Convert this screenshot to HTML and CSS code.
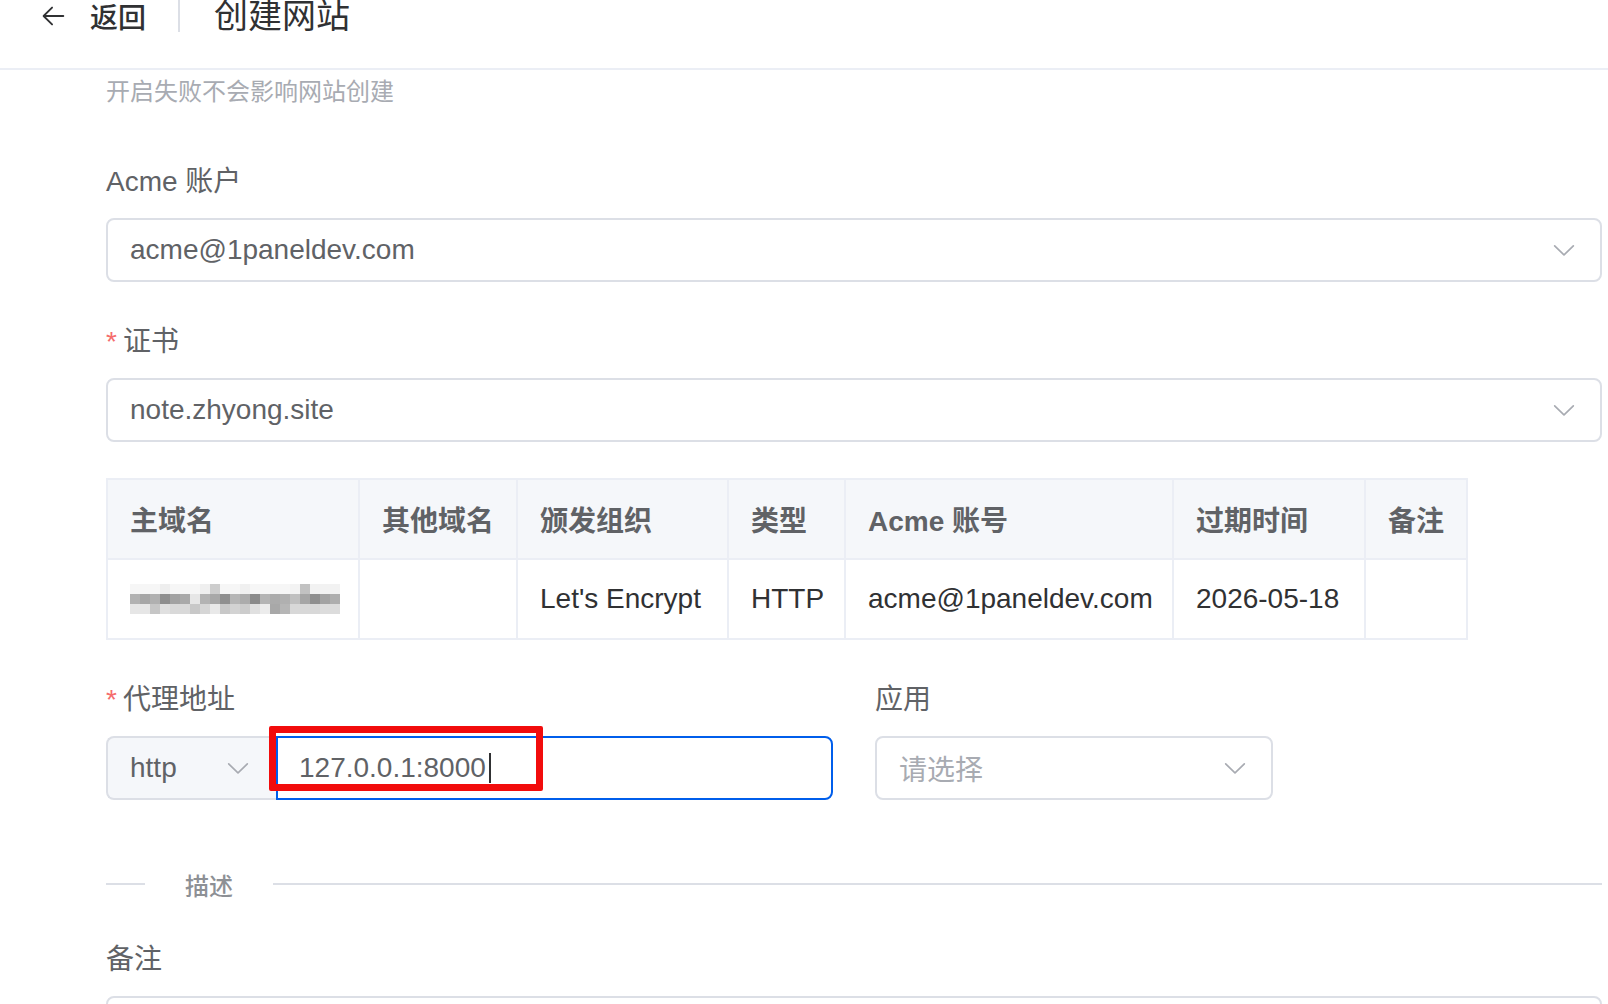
FILE: index.html
```html
<!DOCTYPE html>
<html lang="zh-CN">
<head>
    <meta charset="UTF-8">
    <meta name="viewport" content="width=device-width, initial-scale=1.0">
    <title>创建网站</title>
    <link rel="stylesheet" href="styles.css">
</head>
<body>
    <div class="header">
        <a class="back">
            <svg class="back-icon" viewBox="0 0 1024 1024"><path fill="currentColor" d="M224 480h640a32 32 0 1 1 0 64H224a32 32 0 0 1 0-64z"/><path fill="currentColor" d="m237.248 512 265.408 265.344a32 32 0 0 1-45.312 45.312l-288-288a32 32 0 0 1 0-45.312l288-288a32 32 0 1 1 45.312 45.312L237.248 512z"/></svg>
            <span>返回</span>
        </a>
        <span class="sep"></span>
        <span class="title">创建网站</span>
    </div>

    <div class="content">
        <div class="hint">开启失败不会影响网站创建</div>

        <div class="form-item">
            <label class="label">Acme 账户</label>
            <div class="select">
                <span>acme@1paneldev.com</span>
                <svg class="arrow" viewBox="0 0 1024 1024"><path fill="currentColor" d="M831.872 340.864 512 652.672 192.128 340.864a30.592 30.592 0 0 0-42.752 0 29.12 29.12 0 0 0 0 41.6L489.664 714.24a32 32 0 0 0 44.672 0l340.288-331.712a29.12 29.12 0 0 0 0-41.728 30.592 30.592 0 0 0-42.752 0z"/></svg>
            </div>
        </div>

        <div class="form-item">
            <label class="label required">证书</label>
            <div class="select">
                <span>note.zhyong.site</span>
                <svg class="arrow" viewBox="0 0 1024 1024"><path fill="currentColor" d="M831.872 340.864 512 652.672 192.128 340.864a30.592 30.592 0 0 0-42.752 0 29.12 29.12 0 0 0 0 41.6L489.664 714.24a32 32 0 0 0 44.672 0l340.288-331.712a29.12 29.12 0 0 0 0-41.728 30.592 30.592 0 0 0-42.752 0z"/></svg>
            </div>
        </div>

        <table class="cert-table">
            <colgroup>
                <col class="c-domain">
                <col class="c-other">
                <col class="c-org">
                <col class="c-type">
                <col class="c-acme">
                <col class="c-expire">
                <col class="c-note">
            </colgroup>
            <thead>
                <tr>
                    <th>主域名</th>
                    <th>其他域名</th>
                    <th>颁发组织</th>
                    <th>类型</th>
                    <th>Acme 账号</th>
                    <th>过期时间</th>
                    <th>备注</th>
                </tr>
            </thead>
            <tbody>
                <tr>
                    <td><div class="blur"><div class="blur-top"></div><div class="blur-mid"></div><div class="blur-bottom"></div></div></td>
                    <td></td>
                    <td>Let's Encrypt</td>
                    <td>HTTP</td>
                    <td>acme@1paneldev.com</td>
                    <td>2026-05-18</td>
                    <td></td>
                </tr>
            </tbody>
        </table>

        <div class="form-row">
            <div class="form-item proxy">
                <label class="label required">代理地址</label>
                <div class="input-group">
                    <div class="prepend">
                        <span>http</span>
                        <svg class="arrow" viewBox="0 0 1024 1024"><path fill="currentColor" d="M831.872 340.864 512 652.672 192.128 340.864a30.592 30.592 0 0 0-42.752 0 29.12 29.12 0 0 0 0 41.6L489.664 714.24a32 32 0 0 0 44.672 0l340.288-331.712a29.12 29.12 0 0 0 0-41.728 30.592 30.592 0 0 0-42.752 0z"/></svg>
                    </div>
                    <div class="input focused">
                        <span>127.0.0.1:8000</span><span class="caret"></span>
                    </div>
                    <div class="mark"></div>
                </div>
            </div>
            <div class="form-item app">
                <label class="label">应用</label>
                <div class="select">
                    <span class="placeholder">请选择</span>
                    <svg class="arrow" viewBox="0 0 1024 1024"><path fill="currentColor" d="M831.872 340.864 512 652.672 192.128 340.864a30.592 30.592 0 0 0-42.752 0 29.12 29.12 0 0 0 0 41.6L489.664 714.24a32 32 0 0 0 44.672 0l340.288-331.712a29.12 29.12 0 0 0 0-41.728 30.592 30.592 0 0 0-42.752 0z"/></svg>
                </div>
            </div>
        </div>

        <div class="divider"><span>描述</span></div>

        <div class="form-item">
            <label class="label">备注</label>
            <div class="textarea"></div>
        </div>
    </div>
</body>
</html>
```

FILE: styles.css
```css
* {
    box-sizing: border-box;
}
body {
    margin: 0;
    overflow: hidden;
    font-family: "Liberation Sans", "Noto Sans CJK SC", sans-serif;
    color: #606266;
    background: #fff;
}
.header {
    display: flex;
    align-items: center;
    height: 70px;
    padding: 0 0 36px 38px;
    border-bottom: 2px solid #ebeef5;
    color: #303133;
}
.back {
    display: flex;
    align-items: center;
    font-size: 28px;
    font-weight: 500;
    cursor: pointer;
}
.back-icon {
    width: 30px;
    height: 30px;
    margin-right: 22px;
}
.sep {
    width: 2px;
    height: 32px;
    margin: 0 34px 0 32px;
    background: #dcdfe6;
}
.title {
    font-size: 34px;
    line-height: 32px;
}
.content {
    padding: 4px 6px 0 106px;
}
.hint {
    font-size: 24px;
    line-height: 36px;
    color: #a8abb2;
    margin-bottom: 48px;
}
.form-item {
    margin-bottom: 36px;
}
.label {
    display: block;
    font-size: 28px;
    line-height: 44px;
    padding-top: 2px;
    margin-bottom: 14px;
    color: #606266;
}
.required::before {
    content: "*";
    color: #f56c6c;
    margin-right: 6px;
}
.select {
    display: flex;
    align-items: center;
    justify-content: space-between;
    height: 64px;
    padding: 0 22px;
    border: 2px solid #dcdfe6;
    border-radius: 8px;
    font-size: 28px;
    color: #606266;
}
.arrow {
    width: 28px;
    height: 28px;
    color: #a8abb2;
}
.placeholder {
    color: #a8abb2;
}
.cert-table {
    border-collapse: collapse;
    table-layout: fixed;
    width: 1360px;
    margin-bottom: 36px;
    font-size: 28px;
}
.c-domain { width: 252px; }
.c-other { width: 158px; }
.c-org { width: 211px; }
.c-type { width: 117px; }
.c-acme { width: 328px; }
.c-expire { width: 192px; }
.c-note { width: 102px; }
.cert-table th,
.cert-table td {
    height: 80px;
    padding: 0 22px;
    border: 2px solid #ebeef5;
    text-align: left;
    white-space: nowrap;
}
.cert-table th {
    background: #f5f7fa;
    color: #606266;
    font-weight: bold;
}
.cert-table td {
    color: #303133;
}
.blur {
    width: 210px;
}
.blur-top,
.blur-mid,
.blur-bottom {
    height: 10px;
}
.blur-top {
    background: linear-gradient(to right,
        #f6f6f6 0 30px, #eeeeee 30px 40px, #f6f6f6 40px 70px, #efefef 70px 80px,
        #cdcdcd 80px 90px, #f6f6f6 90px 110px, #f0f0f0 110px 120px, #f6f6f6 120px 160px,
        #f3f3f3 160px 170px, #c2c2c2 170px 180px, #f2f2f2 180px 210px);
}
.blur-mid {
    background: linear-gradient(to right,
        #b2b2b2 0 10px, #a6a6a6 10px 20px, #b0b0b0 20px 30px, #8f8f8f 30px 40px,
        #a2a2a2 40px 50px, #a9a9a9 50px 60px, #e6e6e6 60px 70px, #b3b3b3 70px 80px,
        #a8a8a8 80px 90px, #8f8f8f 90px 100px, #b6b6b6 100px 110px, #acacac 110px 120px,
        #8b8b8b 120px 130px, #b4b4b4 130px 140px, #ababab 140px 150px, #b0b0b0 150px 160px,
        #c0c0c0 160px 170px, #a6a6a6 170px 180px, #8f8f8f 180px 190px, #a3a3a3 190px 200px,
        #aeaeae 200px 210px);
}
.blur-bottom {
    background: linear-gradient(to right,
        #e6e6e6 0 20px, #c6c6c6 20px 30px, #e0e0e0 30px 40px, #d9d9d9 40px 60px,
        #c8c8c8 60px 70px, #d6d6d6 70px 80px, #e9e9e9 80px 90px, #c8c8c8 90px 100px,
        #d3d3d3 100px 110px, #cccccc 110px 120px, #e0e0e0 120px 130px, #ececec 130px 140px,
        #a8a8a8 140px 150px, #b6b6b6 150px 160px, #d8d8d8 160px 190px, #dcdcdc 190px 210px);
}
.form-row {
    display: flex;
    gap: 42px;
}
.proxy {
    width: 727px;
}
.app {
    width: 398px;
}
.input-group {
    position: relative;
    display: flex;
    height: 64px;
}
.prepend {
    display: flex;
    align-items: center;
    justify-content: space-between;
    width: 170px;
    padding: 0 24px 0 22px;
    background: #f5f7fa;
    border: 2px solid #dcdfe6;
    border-right: none;
    border-radius: 8px 0 0 8px;
    font-size: 28px;
    color: #606266;
}
.input {
    flex: 1;
    display: flex;
    align-items: center;
    padding-left: 21px;
    border: 2px solid #dcdfe6;
    border-radius: 0 8px 8px 0;
    font-size: 28px;
    color: #606266;
}
.input.focused {
    border-color: #005eeb;
}
.caret {
    width: 2px;
    height: 30px;
    margin-left: 3px;
    background: #303133;
}
.mark {
    position: absolute;
    left: 163px;
    top: -10px;
    width: 274px;
    height: 65px;
    border: 7px solid #f20c0c;
    border-radius: 2px;
}
.divider {
    position: relative;
    height: 2px;
    margin: 47px 0 51px;
    background: #dcdfe6;
}
.divider span {
    position: absolute;
    left: 39px;
    top: 50%;
    transform: translateY(-50%);
    padding: 0 40px;
    background: #fff;
    font-size: 24px;
    font-weight: 500;
    color: #8d9095;
}
.textarea {
    height: 130px;
    border: 2px solid #dcdfe6;
    border-radius: 8px;
}
```
